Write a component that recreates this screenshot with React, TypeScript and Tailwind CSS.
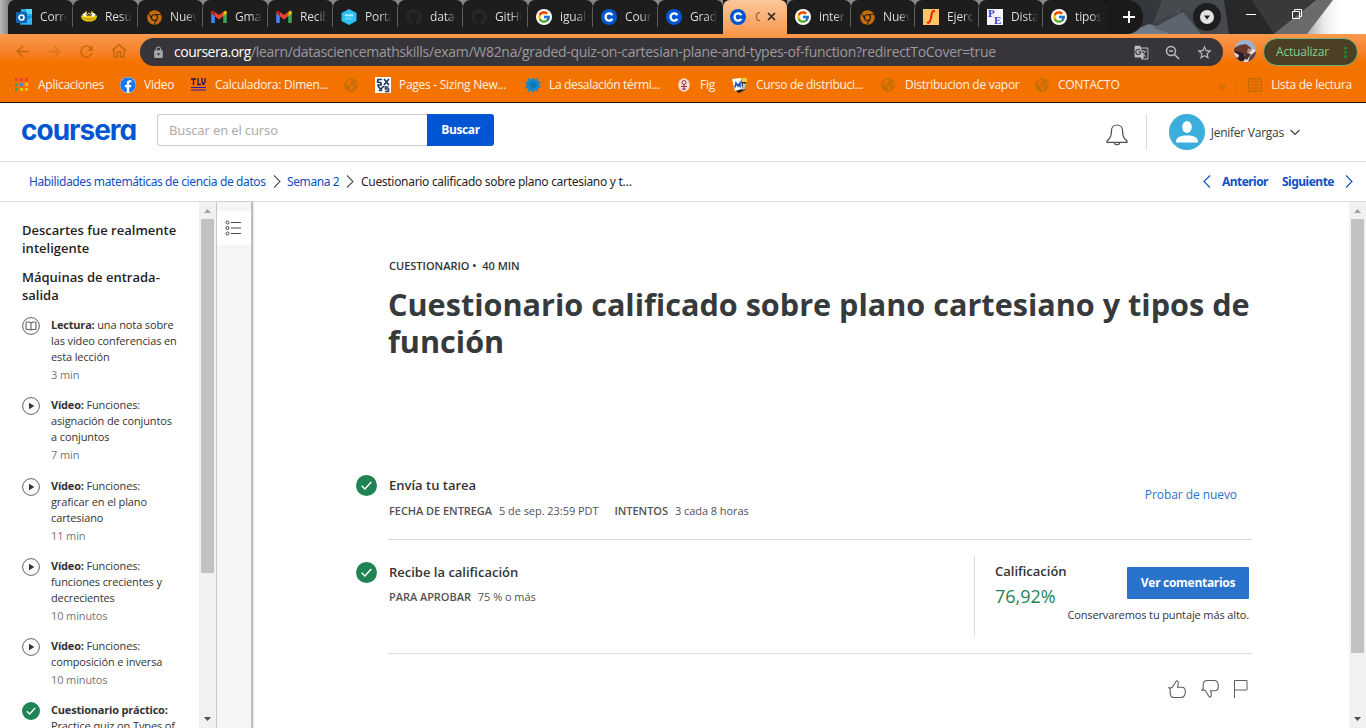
import React from "react";
import { FcGoogle } from "react-icons/fc";
import { FaGithub, FaChrome, FaFacebook, FaGlobeAmericas } from "react-icons/fa";
import {
  MdArrowBack,
  MdArrowForward,
  MdRefresh,
  MdOutlineHome,
  MdLock,
  MdStarBorder,
  MdMoreVert,
  MdGTranslate,
} from "react-icons/md";

const Outlook = () => (
  <svg width="16" height="16" viewBox="0 0 16 16">
    <path d="M5 0h11v8H5z" fill="#28a8ea" />
    <path d="M10 0h6v5h-6z" fill="#50d9ff" />
    <path d="M4 7h12v8.500H4z" fill="#1490df" />
    <path d="M4 15.500 16 8v7.500z" fill="#35b8f1" />
    <rect y="3" width="11" height="11" rx="1" fill="#0f64b8" />
    <circle cx="5.500" cy="8.500" r="2.500" fill="none" stroke="#fff" strokeWidth="1.700" />
  </svg>
);

const Bee = () => (
  <svg width="16" height="16" viewBox="0 0 16 16">
    <path d="M0 6.500h16c0 4-3 6-8 6s-8-2-8-6z" fill="#f5d20a" />
    <path d="M1 8.500c3 1.500 11 1.500 14 0M3 10.800h10" stroke="#b08c10" strokeWidth=".8" fill="none" />
    <path d="M1 5.500L5 3l2 3-3 2zM15 5.500L11 3 9 6l3 2z" fill="#fff" />
    <path d="M4 3.500l2-.5M10 3l2 .5M7 4.500h2" stroke="#e0b820" strokeWidth="1.400" />
    <path d="M5 5l1.500 2M11 5L9.500 7" stroke="#333" strokeWidth="1" />
  </svg>
);

const Chrome = () => <FaChrome size={15} color="#c66c09" />;

const Gmail = () => (
  <svg width="16" height="16" viewBox="0 0 16 16">
    <path d="M1 14h2.800V6.200L.2 3.600V13c0 .6.300 1 .800 1z" fill="#4285f4" />
    <path d="M12.200 14H15c.5 0 .8-.4.8-1V3.600l-3.600 2.600z" fill="#34a853" />
    <path d="M12.200 3v4.200l3.600-2.700V3.400c0-1.400-1.500-2-2.500-1.200z" fill="#fbbc04" />
    <path d="M3.800 7.200V3L8 6.100 12.200 3v4.200L8 10.400z" fill="#ea4335" />
    <path d="M.2 3.400v1.100l3.600 2.700V3l-1.100-.8C1.600 1.400.2 2 .2 3.400z" fill="#c5221f" />
  </svg>
);

const Iron = () => (
  <svg width="16" height="16" viewBox="0 0 16 16">
    <path d="M8 0 15.500 4v8L8 16 .5 12V4z" fill="#2dc0f5" />
    <path d="M4 6.200h8" stroke="#e2f8ff" strokeWidth="2" strokeDasharray="1.500 .6" />
    <path d="M4.500 9.600h7" stroke="#86dcfa" strokeWidth="1.600" strokeDasharray="1.500 .6" />
  </svg>
);

const Git = () => <FaGithub size={16} color="#24292e" />;

const Google = () => (
  <span className="flex size-4 items-center justify-center rounded-full bg-white">
    <FcGoogle size={14} />
  </span>
);

const CourseraMark = () => (
  <svg className="shrink-0" width="16" height="16" viewBox="0 0 16 16">
    <circle cx="8" cy="8" r="8" fill="#0056d2" />
    <path d="M11.300 6.200A3.600 3.600 0 1 0 11.300 9.800" fill="none" stroke="#fff" strokeWidth="2.300" />
  </svg>
);

const Integral = () => (
  <svg width="16" height="16" viewBox="0 0 16 16">
    <rect width="16" height="16" fill="#ffc465" />
    <path d="M12 2.500C9.500.8 8.800 3.500 8.300 7S6.800 15 4 13.300" fill="none" stroke="#f01c00" strokeWidth="1.900" />
  </svg>
);

const PlanetMath = () => (
  <span className="relative block size-4 bg-[#f4f4ff] font-['Liberation_Serif',serif] text-[11px] leading-none font-bold text-[#4040c8]">
    <span className="absolute -top-px left-px">P</span>
    <span className="absolute top-[6px] left-[7px]">E</span>
  </span>
);

type Tab = { icon: React.FC; text: string };

const leftTabs: Tab[] = [
  { icon: Outlook, text: "Corre" },
  { icon: Bee, text: "Resu" },
  { icon: Chrome, text: "Nuev" },
  { icon: Gmail, text: "Gma" },
  { icon: Gmail, text: "Recib" },
  { icon: Iron, text: "Porta" },
  { icon: Git, text: "data-" },
  { icon: Git, text: "GitHu" },
  { icon: Google, text: "igual" },
  { icon: CourseraMark, text: "Cour" },
  { icon: CourseraMark, text: "Grad" },
];

const rightTabs: Tab[] = [
  { icon: Google, text: "inter" },
  { icon: Chrome, text: "Nuev" },
  { icon: Integral, text: "Ejerc" },
  { icon: PlanetMath, text: "Dista" },
  { icon: Google, text: "tipos" },
];

const TabItem = ({ tab, width, divider }: { tab: Tab; width: string; divider: boolean }) => (
  <div className={`${width} relative flex h-[34px] shrink-0 items-center rounded-t-[7px] bg-[#1d1d1d] pl-2`}>
    <span className="flex size-4 shrink-0 items-center justify-center">
      <tab.icon />
    </span>
    <span className="ml-2 w-[27px] overflow-hidden bg-linear-to-r from-[#e4e4e4] from-60% to-transparent bg-clip-text text-xs tracking-[-0.15px] whitespace-nowrap text-transparent">
      {tab.text}
    </span>
    {divider && <span className="absolute top-[7px] right-0 h-5 w-px bg-[#5c5c5c]" />}
  </div>
);

const TabStrip = () => (
  <div className="relative flex h-[34px] items-start overflow-hidden bg-[#161719]">
    <svg className="absolute inset-0" width="1366" height="34">
      <defs>
        <linearGradient id="sky" x1="0" x2="1">
          <stop offset="0" stopColor="#3a3d42" />
          <stop offset=".55" stopColor="#4a4b4e" />
          <stop offset=".74" stopColor="#8c8c8c" />
          <stop offset=".84" stopColor="#ececec" />
          <stop offset=".9" stopColor="#fff" />
        </linearGradient>
        <linearGradient id="edge" x1="0" x2="1">
          <stop offset="0" stopColor="#b8b8b8" />
          <stop offset="1" stopColor="#5a5a5a" />
        </linearGradient>
      </defs>
      <path d="M0 0h1120v8H0z" fill="#85888c" />
      <path d="M0 0h16v34H0z" fill="url(#edge)" />
      <path d="M1106 0h260v34h-260z" fill="url(#sky)" />
      <path d="M1090 0h40v34h-40z" fill="#131415" />
      <path d="M1128 0h34l-9 24-23 10h-10z" fill="#34373b" />
      <path d="M1170 0h14l-6 14z" fill="#5b5c5f" />
      <path d="M1125 34l24-10 35 10z" fill="#707b89" />
      <path d="M1153 28l30-16 18 22h-30z" fill="#5d646e" />
      <path d="M1162 0h62l-17 20-24-12-30 16z" fill="#46494d" />
      <path d="M1224 0h36l15 34h-46z" fill="#27282a" />
      <path d="M1252 0h65l-43 34z" fill="#39393b" />
      <path d="M1317 0h16l-26 34h-33z" fill="#6a6a6c" />
    </svg>
    <div className="relative flex pl-2">
      {leftTabs.map((t, i) => (
        <TabItem key={i} tab={t} width="w-[65px]" divider={i < 10} />
      ))}
      <div className="flex h-[34px] w-16 items-center bg-[#1d1d1d]">
        <div className="flex h-[34px] w-16 items-center rounded-t-[7px] bg-linear-to-b from-[#fbc79b] to-[#f9994b] pl-[7px]">
          <CourseraMark />
          <span className="ml-[9px] w-[5px] overflow-hidden text-xs text-[#805a40]">C</span>
          <svg className="ml-[7px]" width="10" height="10" viewBox="0 0 10 10">
            <path d="M1 1l7 7M8 1L1 8" stroke="#2c241e" strokeWidth="1.700" />
          </svg>
        </div>
      </div>
      {rightTabs.map((t, i) => (
        <TabItem key={i} tab={t} width="w-16" divider={i < 4} />
      ))}
      <div className="flex h-[34px] w-[36px] items-center rounded-r-2xl bg-[#1a1a1a] pl-4">
        <svg width="12" height="12" viewBox="0 0 12 12">
          <path d="M6 0v12M0 6h12" stroke="#fff" strokeWidth="2" />
        </svg>
      </div>
    </div>
    <div className="relative mt-[3px] ml-[50px] flex size-[28px] shrink-0 items-center justify-center rounded-full bg-[#1d1e1f]">
      <svg width="14" height="14" viewBox="0 0 14 14">
        <circle cx="7" cy="7" r="7" fill="#e2e2e2" />
        <path d="M4 5.500h6L7 9.500z" fill="#1d1d1d" />
      </svg>
    </div>
    <span className="relative mt-[14px] ml-[25px] h-px w-[10px] shrink-0 bg-white" />
    <svg className="relative mt-[9px] ml-[36px] shrink-0" width="11" height="11" viewBox="0 0 11 11">
      <path d="M.5 2.500h7v7h-7zM2.500 2.500v-2h7v7h-2" fill="none" stroke="#fff" />
    </svg>
  </div>
);

const Toolbar = () => (
  <div className="flex h-[34px] items-center bg-linear-to-b from-[#f9994b] to-[#f57400] to-80% text-[#c76a08]">
    <div className="flex w-[140px] shrink-0 items-center gap-[13px] pl-[13px]">
      <MdArrowBack size={19} />
      <MdArrowForward size={19} className="opacity-50" />
      <MdRefresh size={19} />
      <MdOutlineHome size={20} />
    </div>
    <div className="mt-1 flex h-7 w-[1083px] shrink-0 items-center self-start rounded-full bg-[#37343a] pl-3 text-[#9b9a9d]">
      <MdLock size={13} color="#a4a7ac" />
      <span className="ml-[9px] text-sm whitespace-nowrap">
        <span className="tracking-[-0.5px] text-white">coursera.org</span>
        <span className="tracking-[-0.3px]">
          /learn/datasciencemathskills/exam/W82na/graded-quiz-on-cartesian-plane-and-types-of-function?redirectToCover=true
        </span>
      </span>
      <div className="ml-auto flex items-center gap-4 pr-[10px] text-[#bdbdbd]">
        <MdGTranslate size={15} />
        <svg width="15" height="15" viewBox="0 0 15 15" fill="none" stroke="currentColor" strokeWidth="1.500">
          <circle cx="6" cy="6" r="4.500" />
          <path d="M9.500 9.500l4.500 4.500M4 6h4" />
        </svg>
        <MdStarBorder size={17} />
      </div>
    </div>
    <svg className="ml-[11px] shrink-0" width="22" height="22" viewBox="0 0 22 22">
      <defs>
        <clipPath id="face">
          <circle cx="11" cy="11" r="11" />
        </clipPath>
      </defs>
      <g clipPath="url(#face)">
        <path d="M0 0h22v22H0z" fill="#9db2d2" />
        <path d="M0 8l6-3 6-1 5 4-2 5-8 3-7-3z" fill="#6a382a" />
        <path d="M1 11l8 2 4 6-6 3-7-4z" fill="#2d1d20" />
        <path d="M14 8l3 2-1 4-3-1z" fill="#c48b74" />
        <path d="M11 18l8-9 3 2-8 11h-4z" fill="#e6e0e0" />
        <path d="M12 13l5 1-4 6-3-2z" fill="#4a2c2c" />
        <path d="M16 16l6-5v11h-8z" fill="#5b4048" />
        <path d="M0 12l5 3-1 3-4-2z" fill="#d9d5dc" />
      </g>
    </svg>
    <div className="mt-1 ml-[7px] flex h-7 w-[95px] shrink-0 items-center self-start rounded-full border border-[#70b97c] bg-[#4b4026] pl-3 text-xs tracking-[-0.2px] text-[#83cf92]">
      <span>Actualizar</span>
      <MdMoreVert size={17} className="ml-2 text-[#218b3c]" />
    </div>
  </div>
);

const Globe = () => <FaGlobeAmericas size={14} color="#c66f09" />;

const BookmarksBar = () => (
  <div className="flex h-[35px] items-center border-b border-[#17171c] bg-[#f37200] pb-px pl-[15px] text-xs tracking-[-0.27px] whitespace-nowrap text-[#fff3e4]">
    <svg width="13" height="13" viewBox="0 0 13 13">
      <path d="M0 0h3v3H0zM5 0h3v3H5zM10 0h3v3h-3z" fill="#ea4335" />
      <path d="M0 5h3v3H0z" fill="#34a853" />
      <path d="M5 5h3v3H5z" fill="#4285f4" />
      <path d="M10 5h3v3h-3z" fill="#fbbc04" />
      <path d="M0 10h3v3H0z" fill="#34a853" />
      <path d="M5 10h3v3H5zM10 10h3v3h-3z" fill="#fbbc04" />
    </svg>
    <span className="ml-[10px] w-[82px]">Aplicaciones</span>
    <span className="flex size-4 items-center justify-center rounded-full bg-white">
      <FaFacebook size={16} color="#1877f2" />
    </span>
    <span className="ml-2 w-[47px]">Video</span>
    <svg width="15" height="13" viewBox="0 0 15 13" fill="none" stroke="#1b1464">
      <path d="M0 1h5M2.500 1v6M7 0v6.500h3M11 0v4l1.500 2.500L14 4V0" strokeWidth="1.300" />
      <path d="M0 9.500h15M0 12h15" stroke="#2020b0" />
    </svg>
    <span className="ml-[9px] w-[129px]">Calculadora: Dimen...</span>
    <Globe />
    <svg className="ml-[17px]" width="16" height="16" viewBox="0 0 16 16">
      <rect width="16" height="16" fill="#fff" />
      <path d="M7 2.500H3L2.500 5 6 6v2H2M9 2l5 6M14 2L9 8M9 9L4 14M13.500 10h-3v2h3v2.500h-3.500M3 9l4 5" fill="none" stroke="#1d3b66" strokeWidth="1.700" />
    </svg>
    <span className="ml-2 w-[126px]">Pages - Sizing New...</span>
    <svg width="16" height="16" viewBox="0 0 16 16">
      <path d="M8 0l1.300 2.600L12.500 1l.2 3.300L16 5l-2 2.600 2 2.400-3 1 .2 3.500-3.400-1.300L8 16l-1.800-2.600L3 15l-.2-3.500L0 11l1.800-3L0 5.500l3-1.200L3 1l3.500 1.400z" fill="#2087c5" />
      <circle cx="8" cy="8" r="3.500" fill="#0779bd" />
    </svg>
    <span className="ml-2 w-[129px] tracking-[-0.33px]">La desalación térmi...</span>
    <svg width="12" height="14" viewBox="0 0 12 14">
      <ellipse cx="6" cy="7" rx="5.700" ry="6.700" fill="#f3e0dc" />
      <circle cx="6" cy="4.500" r="2" fill="none" stroke="#a03038" />
      <path d="M6 6v6M3 8.500h6M4 11h4" stroke="#a03038" fill="none" />
    </svg>
    <span className="ml-[10px] w-8">Fig</span>
    <svg width="16" height="16" viewBox="0 0 16 16">
      <path d="M3 3l11-1-1 11-6 3-3-2z" fill="#222" />
      <path d="M0 2l9-1 1 11-7 2z" fill="#fff" />
      <path d="M3 10.500L4 6l2 3 2-3v4.500" fill="none" stroke="#1a56c4" strokeWidth="1.600" />
      <path d="M9 1h6v4h-5z" fill="#f4c93c" />
      <path d="M11 6l3 1-1 5-3 1z" fill="#b9c5d5" />
    </svg>
    <span className="ml-2 w-[125px] tracking-[-0.33px]">Curso de distribuci...</span>
    <Globe />
    <span className="ml-[10px] w-[130px]">Distribucion de vapor</span>
    <Globe />
    <span className="ml-[9px]">CONTACTO</span>
    <div className="ml-auto flex items-center pr-[14px]">
      <span className="text-base leading-none text-[#c76a08]">»</span>
      <span className="ml-[10px] h-4 w-px bg-[#e06c05]" />
      <svg className="ml-3" width="14" height="14" viewBox="0 0 14 14" fill="none" stroke="#c76a08">
        <path d="M.7.7h12.600v12.600H.7zM3 4h2M6 4h5M3 7h2M6 7h5M3 10h2M6 10h5" strokeWidth="1.400" />
      </svg>
      <span className="ml-[9px]">Lista de lectura</span>
    </div>
  </div>
);

const Chevron = ({ d, w, h, className = "" }: { d: string; w: number; h: number; className?: string }) => (
  <svg className={`shrink-0 ${className}`} width={w} height={h} viewBox={`0 0 ${w} ${h}`} fill="none" stroke="currentColor" strokeWidth="1.100">
    <path d={d} />
  </svg>
);

const CourseHeader = () => (
  <header className="flex h-[59px] shrink-0 items-start border-b border-[#dcdcdc] pt-[11px] pl-[21px]">
    <span className="mt-[1px] w-[136px] font-[Inter,sans-serif] text-[28px] leading-[30px] font-bold tracking-[-1px] text-[#0056d2] [font-feature-settings:'cv11']">
      coursera
    </span>
    <div className="flex h-8">
      <div className="flex w-[270px] items-center rounded-l-[3px] border border-r-0 border-[#c7cbd6] pt-[2px] pl-[11px] font-['Noto_Sans',sans-serif] text-[13px] tracking-[-0.15px] text-[#adadad]">
        Buscar en el curso
      </div>
      <button className="w-[67px] rounded-r-[3px] bg-[#0056d2] text-xs font-bold tracking-[-0.4px] text-white">Buscar</button>
    </div>
    <div className="ml-auto flex h-9 items-center pr-[66px] text-[#3c3c3c]">
      <svg className="mt-[5px]" width="22" height="22" viewBox="0 0 22 22" fill="none" stroke="#4c4f58" strokeWidth="1.200">
        <path d="M1 17l2.500-2.500c1.500-2 2-4 2-8C5.500 3.500 7.500 1 11 1s5.500 2.500 5.500 5.500c0 4 .5 6 2 8L21 17v1.300H1zM8.500 18.500c0 3 5 3 5 0" />
      </svg>
      <span className="ml-[18px] h-9 w-px bg-[#dcdcdc]" />
      <svg className="ml-[22px]" width="36" height="36" viewBox="0 0 36 36">
        <circle cx="18" cy="18" r="18" fill="#3caedb" />
        <ellipse cx="18" cy="13" rx="4.800" ry="6" fill="#fff" />
        <path d="M7 28.500c0-5 3-7 11-7s11 2 11 7z" fill="#fff" />
      </svg>
      <span className="ml-[6px] pt-[2px] text-xs tracking-[-0.25px] whitespace-nowrap">Jenifer Vargas</span>
      <Chevron className="mt-px ml-[6px]" d="M.5 1l4.500 4.500L9.500 1" w={10} h={7} />
    </div>
  </header>
);

const Breadcrumbs = () => (
  <nav className="flex h-10 shrink-0 items-center border-b border-[#dcdcdc] pr-[13px] pl-[29px] font-['Noto_Sans',sans-serif] text-xs whitespace-nowrap text-[#0f4fc4]">
    <span className="w-[237px] tracking-[-0.38px]">Habilidades matemáticas de ciencia de datos</span>
    <Chevron className="ml-[7px] text-[#555]" d="M1 .5l6 6-6 6" w={8} h={13} />
    <span className="ml-[6px] w-[52px] tracking-[-0.4px]">Semana 2</span>
    <Chevron className="ml-[7px] text-[#555]" d="M1 .5l6 6-6 6" w={8} h={13} />
    <span className="ml-[7px] tracking-[-0.3px] text-[#1f1f1f]">Cuestionario calificado sobre plano cartesiano y t…</span>
    <div className="ml-auto flex items-center font-bold">
      <Chevron d="M7 .5l-6 6 6 6" w={8} h={13} />
      <span className="ml-[11px] w-[46px] tracking-[-0.55px]">Anterior</span>
      <span className="ml-[14px] w-[52px] tracking-[-0.5px]">Siguiente</span>
      <Chevron className="ml-[11px]" d="M1 .5l6 6-6 6" w={8} h={13} />
    </div>
  </nav>
);

const Scrollbar = ({ thumb }: { thumb: string }) => (
  <div className="flex w-[17px] shrink-0 flex-col items-center bg-[#f1f1f1]">
    <svg className="shrink-0" width="17" height="17" viewBox="0 0 17 17">
      <path d="M5 11h7L8.500 7z" fill="#a3a3a3" />
    </svg>
    <div className={`${thumb} w-[13px] shrink-0 bg-[#c1c1c1]`} />
    <svg className="mt-auto shrink-0" width="17" height="17" viewBox="0 0 17 17">
      <path d="M5 6h7l-3.500 4z" fill="#505050" />
    </svg>
  </div>
);

const CheckDot = ({ size }: { size: number }) => (
  <svg className="shrink-0" width={size} height={size} viewBox="0 0 21 21">
    <circle cx="10.500" cy="10.500" r="10.500" fill="#1f8354" />
    <path d="M5.700 10.800l3.200 3.200 6.400-7" fill="none" stroke="#fff" strokeWidth="1.500" />
  </svg>
);

const ReadDot = () => (
  <svg className="shrink-0" width="18" height="18" viewBox="0 0 18 18" fill="none" stroke="#4c4f58">
    <circle cx="9" cy="9" r="8.400" strokeWidth=".9" />
    <path d="M9 6c-1-1-3-1-5-.8v7.300c2-.2 4-.2 5 .6 1-.8 3-.8 5-.6V5.200C12 5 10 5 9 6zm0 0v7" />
  </svg>
);

const PlayDot = () => (
  <svg className="shrink-0" width="18" height="18" viewBox="0 0 18 18">
    <circle cx="9" cy="9" r="8.400" fill="none" stroke="#4c4f58" strokeWidth=".9" />
    <path d="M7 5.800L12.300 9 7 12.200z" fill="#30333c" />
  </svg>
);

const lessons = [
  { icon: "read", kind: "Lectura:", lines: ["una nota sobre", "las video conferencias en", "esta lección"], time: "3 min" },
  { icon: "play", kind: "Vídeo:", lines: ["Funciones:", "asignación de conjuntos", "a conjuntos"], time: "7 min" },
  { icon: "play", kind: "Vídeo:", lines: ["Funciones:", "graficar en el plano", "cartesiano"], time: "11 min" },
  { icon: "play", kind: "Vídeo:", lines: ["Funciones:", "funciones crecientes y", "decrecientes"], time: "10 minutos" },
  { icon: "play", kind: "Vídeo:", lines: ["Funciones:", "composición e inversa"], time: "10 minutos" },
  { icon: "done", kind: "Cuestionario práctico:", lines: ["", "Practice quiz on Types of"], time: "" },
];

const Sidebar = () => (
  <aside className="flex w-[199px] shrink-0 flex-col overflow-hidden pt-[19px] pl-[22px]">
    <h3 className="text-[13px] leading-[18px] font-semibold whitespace-nowrap text-[#1f1f1f]">
      Descartes fue realmente
      <br />
      inteligente
    </h3>
    <h3 className="mt-[11px] text-[13px] leading-[18px] font-semibold whitespace-nowrap text-[#1f1f1f]">
      Máquinas de entrada-
      <br />
      salida
    </h3>
    <ul className="mt-[13px] flex flex-col gap-[14.3px]">
      {lessons.map((l, i) => (
        <li key={i} className="flex shrink-0 gap-[11px] text-[11px] leading-4 tracking-[-0.12px] whitespace-nowrap text-[#333]">
          <span className="w-[18px]">
            {l.icon === "read" ? <ReadDot /> : l.icon === "play" ? <PlayDot /> : <CheckDot size={18} />}
          </span>
          <div>
            {l.lines.map((line, n) => (
              <p key={n}>
                {n === 0 && <b className="font-bold tracking-[-0.2px]">{l.kind} </b>}
                {line}
              </p>
            ))}
            {l.time && <p className="mt-[2px] text-[#757575]">{l.time}</p>}
          </div>
        </li>
      ))}
    </ul>
  </aside>
);

const Rail = () => (
  <div className="z-10 w-[35px] shrink-0 border-l border-[#c8c8c8] bg-[#f5f5f5] pt-[9px] shadow-[2px_0_1px_0_rgba(0,0,0,0.2),3px_0_2px_0_rgba(0,0,0,0.08)]">
    <div className="flex h-[34px] items-center justify-center bg-white pr-[3px]">
      <svg width="16" height="16" viewBox="0 0 16 16" fill="none" stroke="#4b4b4b">
        <circle cx="2.500" cy="2.500" r="1.500" />
        <circle cx="2.500" cy="8" r="1.500" />
        <circle cx="2.500" cy="13.500" r="1.500" />
        <path d="M6 2.500h10M6 8h10M6 13.500h10" />
      </svg>
    </div>
  </div>
);

const QuizPage = () => (
  <main className="flex min-w-0 flex-1 flex-col pt-[56px] pl-[105px] text-[#333]">
    <p className="ml-[33px] text-[11px] leading-4 font-semibold">
      CUESTIONARIO •&nbsp; 40 MIN
    </p>
    <h1 className="mt-[12px] ml-[32px] text-[30.6px] leading-[37px] font-bold whitespace-nowrap text-[#373a3c]">
      Cuestionario calificado sobre plano cartesiano y tipos de
      <br />
      función
    </h1>
    <section className="mt-[115px] flex h-[65px] w-[896px]">
      <CheckDot size={21} />
      <div className="ml-[11px] flex flex-1 border-b border-[#dcdcdc]">
        <div className="pl-px whitespace-nowrap">
          <h2 className="text-[13px] leading-5 font-semibold">Envía tu tarea</h2>
          <p className="mt-[8px] text-[11px] leading-4 tracking-[-0.05px] text-[#525252]">
            <b className="font-semibold">FECHA DE ENTREGA</b>
            <span className="ml-[7px]">5 de sep. 23:59 PDT</span>
            <b className="ml-4 font-semibold">INTENTOS</b>
            <span className="ml-[7px]">3 cada 8 horas</span>
          </p>
        </div>
        <a className="mt-[10px] mr-[15px] ml-auto text-xs leading-5 tracking-[-0.07px] text-[#2a73cc]">Probar de nuevo</a>
      </div>
    </section>
    <section className="flex h-[114px] w-[896px] pt-[22px]">
      <CheckDot size={21} />
      <div className="ml-[11px] flex flex-1 border-b border-[#dcdcdc]">
        <div className="pl-px whitespace-nowrap">
          <h2 className="text-[13px] leading-5 font-semibold">Recibe la calificación</h2>
          <p className="mt-[7px] text-[11px] leading-4 tracking-[-0.05px] text-[#525252]">
            <b className="font-semibold">PARA APROBAR</b>
            <span className="ml-[7px]">75 % o más</span>
          </p>
        </div>
        <div className="-mt-[6px] ml-auto flex h-[81px] w-[278px] border-l border-[#dcdcdc] pt-[5px] pl-5 whitespace-nowrap">
          <div className="w-[72px]">
            <h2 className="text-[13px] leading-5 font-semibold">Calificación</h2>
            <p className="mt-[3px] text-lg leading-6 text-[#1f8354]">76,92%</p>
          </div>
          <div className="flex flex-1 flex-col items-end pt-[6px] pr-[3px]">
            <button className="h-8 w-[122px] rounded-[1px] bg-[#2a73cc] text-xs font-bold tracking-[-0.3px] text-white">Ver comentarios</button>
            <p className="mt-[8px] text-[11px] leading-4 tracking-[-0.12px]">Conservaremos tu puntaje más alto.</p>
          </div>
        </div>
      </div>
    </section>
    <div className="mt-[26px] flex w-[896px] justify-end gap-[15px] pr-1 text-[#5e5e66]">
      <svg width="18" height="18" viewBox="0 0 18 18" fill="none" stroke="currentColor" strokeWidth="1.100">
        <path d="M.7 7.700h3.300L8.500.8c2 0 2.200 1.500 1.300 5.500l-.3 1H14c2.500 0 3.300 2 3.300 4.200 0 4-1.300 6-4.300 6H6.500c-3 0-4.300-1.500-4.300-5V9z" />
      </svg>
      <svg width="18" height="18" viewBox="0 0 18 18" fill="none" stroke="currentColor" strokeWidth="1.100">
        <path d="M.7 10.300h3.300l4.500 6.900c2 0 2.200-1.500 1.300-5.500l-.3-1H14c2.500 0 3.300-2 3.300-4.200 0-4-1.300-6-4.300-6H6.500c-3 0-4.300 1.500-4.300 5V9z" />
      </svg>
      <svg width="14" height="18" viewBox="0 0 14 18" fill="none" stroke="currentColor">
        <path d="M.5 18V.5h12.500v9.500H.5" />
      </svg>
    </div>
  </main>
);

export default function App() {
  return (
    <div className="flex h-[728px] w-[1366px] flex-col overflow-hidden bg-white font-['Open_Sans',sans-serif]">
      <TabStrip />
      <Toolbar />
      <BookmarksBar />
      <CourseHeader />
      <Breadcrumbs />
      <div className="flex min-h-0 flex-1">
        <Sidebar />
        <Scrollbar thumb="h-[354px]" />
        <Rail />
        <QuizPage />
        <Scrollbar thumb="h-[434px]" />
      </div>
    </div>
  );
}
